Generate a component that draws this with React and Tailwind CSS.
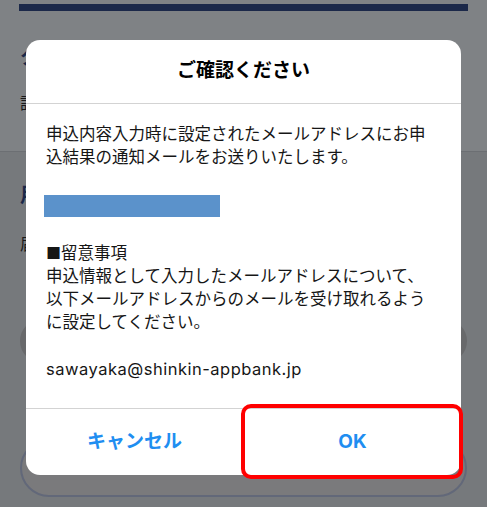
import React from "react";

export default function App() {
  const font = { fontFamily: "Inter, 'Noto Sans CJK JP', sans-serif" };
  return (
    <div className="relative w-[487px] h-[507px] overflow-hidden bg-[#76797c]" style={font}>
      {/* background page (dimmed) */}
      <div className="flex flex-col">
        <div className="bg-[#7f8285] flex flex-col h-[152px] border-b border-[#6c6f73]">
          <div className="mt-[4px] mx-[19px] h-[7px] bg-[#1b2849]" />
          <div className="mt-[33px] ml-[20px] text-[20px] leading-[26px] font-bold text-[#1b2849]">タイトル</div>
          <div className="mt-[22px] ml-[20px] text-[16px] leading-[22px] text-[#1a1a1a]">設定されたメールアドレス</div>
        </div>
        <div className="flex flex-col">
          <div className="mt-[30px] ml-[20px] text-[20px] leading-[26px] font-bold text-[#1b2849]">用途</div>
          <div className="mt-[25px] ml-[20px] text-[16px] leading-[22px] text-[#1a1a1a]">届出</div>
          <div className="mt-[64px] mx-[20px] h-[44px] rounded-full bg-[#68696b]" />
          <div className="mt-[76px] mx-[20px] h-[58px] rounded-full border-2 border-[#626879] bg-[#7a7a7c]" />
        </div>
      </div>

      {/* modal */}
      <div className="absolute left-[26px] top-[40px] w-[435px] h-[435px] bg-white rounded-[14px] flex flex-col overflow-hidden">
        <div className="h-[64px] flex items-center justify-center border-b border-[#d3d3d3] text-[19px] font-bold text-black">
          ご確認ください
        </div>
        <div className="flex-1 px-[20px] pt-[19px] text-[16.5px] leading-[23px] text-[#161616] flex flex-col whitespace-nowrap">
          <p>
            申込内容入力時に設定されたメールアドレスにお申
            <br />
            込結果の通知メールをお送りいたします。
          </p>
          <div className="mt-[26px] ml-[-2px] w-[176px] h-[22px] bg-[#5b92cb]" />
          <p className="mt-[25px]">
            ■留意事項
            <br />
            申込情報として入力したメールアドレスについて、
            <br />
            以下メールアドレスからのメールを受け取れるよう
            <br />
            に設定してください。
          </p>
          <p className="mt-[24px] tracking-[0.5px]">sawayaka@shinkin-appbank.jp</p>
        </div>
        <div className="h-[67px] border-t border-[#d3d3d3] flex">
          <button className="flex-1 flex items-center justify-center text-[19px] font-bold text-[#1f8ef1] border-r border-[#d3d3d3]">
            キャンセル
          </button>
          <button className="flex-1 flex items-center justify-center text-[19px] font-bold text-[#1f8ef1]">
            OK
          </button>
        </div>
      </div>

      {/* red highlight */}
      <div className="absolute left-[241px] top-[404px] w-[222px] h-[75px] border-[4px] border-[#ff0000] rounded-[10px]" />
    </div>
  );
}
